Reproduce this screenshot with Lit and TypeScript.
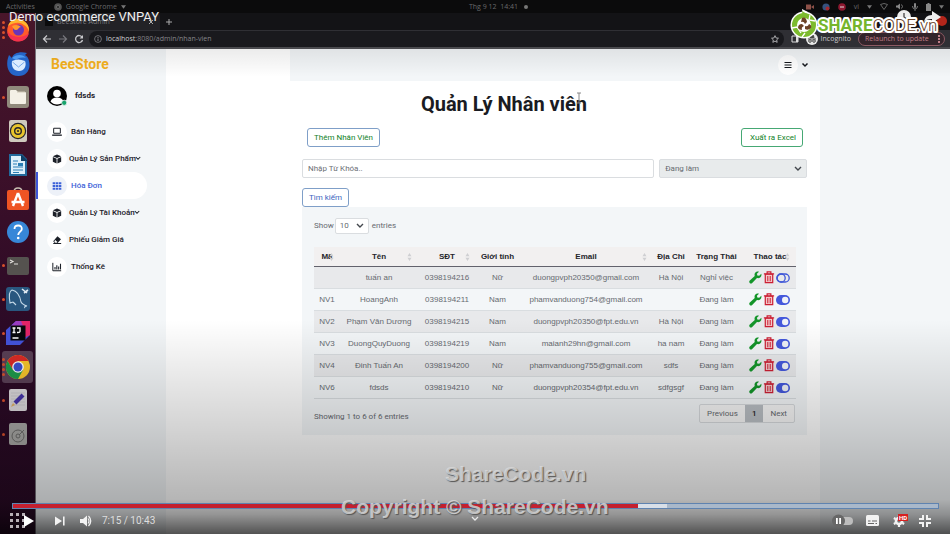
import { LitElement, html, svg, css, nothing } from "lit";
import { customElement } from "lit/decorators.js";
import { classMap } from "lit/directives/class-map.js";

const chevron = html`<svg class="chev" viewBox="0 0 8 6" width="8" height="6" aria-hidden="true"><path d="M1 1l3 3 3-3" fill="none" stroke="currentColor" stroke-width="1.4"/></svg>`;

const navIcons: Record<string, unknown> = {
  laptop: svg`<path d="M2 1.500h8v6H2z" fill="none" stroke="currentColor" stroke-width="1.200"/><path d="M.2 9h11.600v1.600H.2z" fill="currentColor"/>`,
  cube: svg`<path d="M6 .6l5 2.100L6 4.800 1 2.700z M1 3.700L5.500 5.600V11.400L1 9.200z M11 3.700L6.500 5.600V11.400L11 9.200z" fill="currentColor"/>`,
  grid: svg`<path d="M.8 1.500h3v2.500H.8z M4.500 1.500h3v2.500h-3z M8.200 1.500h3v2.500h-3z M.8 4.800h3v2.500H.8z M4.500 4.800h3v2.500h-3z M8.200 4.800h3v2.500h-3z M.8 8.100h3v2.500H.8z M4.500 8.100h3v2.500h-3z M8.200 8.100h3v2.500h-3z" fill="currentColor"/>`,
  eraser: svg`<path d="M6.500 1.500l4.300 3.600-4.300 4.900H3.400L1.500 7.600z" fill="currentColor"/><path d="M3.800 6l2.700 2.500-.8.800H3.900L2.800 7.800z" fill="#fff"/><path d="M1.500 10.200h9.500" stroke="currentColor" stroke-width="1.200"/>`,
  chart: svg`<path d="M1 1v9.500h10" fill="none" stroke="currentColor" stroke-width="1.200"/><path d="M3.600 9V6 M5.800 9V4 M8 9V5.500 M10.200 9V2" stroke="currentColor" stroke-width="1.300"/>`,
};

const dockApps: { name: string; dots: number; active?: boolean; art: unknown }[] = [
  { name: "Firefox", dots: 4, art: svg`<circle cx="12" cy="12.500" r="10.800" fill="#ff5a2a"/><path d="M2 8C4 2 9 0 13 1c6 1 11 6 10 13-1-4-3-6-5-7-4-3-9-3-16 1z" fill="#ffb52e"/><path d="M1.500 13c0 6 5 10.500 10.500 10.500S22 20 23 15c-4 5-17 6-21.500-2z" fill="#f5314f"/><circle cx="12.500" cy="12" r="5.500" fill="#6a35b8"/><path d="M6 8c4-2 7-1 9 1-3 0-2 3-5 3-2 0-3-2-4-4z" fill="#ff9a2c"/>` },
  { name: "Thunderbird", dots: 0, art: svg`<path d="M2 6C0 12 1 24 12.500 24 21 24 25 17 23 9c-.5-3-2-5-4-6l2-2C14-1 7 1 6 6L3 3z" fill="#2565c8"/><path d="M6 6c4-4 11-4 14 0-5-1-8 0-10 2z" fill="#4f9cf2"/><path d="M6 9q6-3 13 0c2 5-1 10-6 10S5 15 6 9z" fill="#dcecff"/><path d="M6.500 10l6 5 6-5" fill="none" stroke="#7aabea"/>` },
  { name: "Files", dots: 1, art: svg`<rect x="1" y="1" width="22" height="22" rx="3" fill="#918a7c"/><path d="M4 6q0-1 1-1h5l2 2h7q1 0 1 1v10q0 1-1 1H5q-1 0-1-1z" fill="#f4f0e6"/><path d="M11 7h8" stroke="#cfc8b8"/>` },
  { name: "Rhythmbox", dots: 0, art: svg`<rect x="3" y="1" width="18" height="22" rx="2" fill="#cfc9bd"/><circle cx="12" cy="12" r="8.200" fill="#25242a"/><circle cx="12" cy="12" r="5.500" fill="none" stroke="#e9c52c" stroke-width="3"/><circle cx="12" cy="12" r="2.600" fill="#e9c52c"/><circle cx="12" cy="12" r="1" fill="#222"/>` },
  { name: "Writer", dots: 0, art: svg`<path d="M3 1h13l5 5v17H3z" fill="#236a9c"/><path d="M5 3h10v5h4v13H5z" fill="#dff0fa"/><path d="M15 1l7 7h-7z" fill="#0f3f66"/><path d="M7 8h5 M7 11h4 M7 14h10 M7 17h10 M7 19.500h6" stroke="#2b7fb5" stroke-width="1.200"/><path d="M12 10h5v3h-5z" fill="#2b7fb5"/>` },
  { name: "Software", dots: 0, art: svg`<path d="M8 6q0-4 4-4t4 4" fill="none" stroke="#c9bfb2" stroke-width="1.500"/><rect x="1" y="4" width="22" height="20" rx="2" fill="#ee5423"/><path d="M12 7l5 13 M12 7L7 20 M5.500 16h13" stroke="#fff" stroke-width="2.400" fill="none"/>` },
  { name: "Help", dots: 0, art: svg`<circle cx="12" cy="12" r="11" fill="#3787d8"/><path d="M8.500 9q0-3.500 3.700-3.500T15.800 9c0 2.500-3.600 3-3.600 6" fill="none" stroke="#fff" stroke-width="1.800"/><circle cx="12.200" cy="18" r="1.300" fill="#fff"/>` },
  { name: "Terminal", dots: 1, art: svg`<rect x="1" y="3" width="22" height="18" rx="2" fill="#55524f"/><path d="M4 6l3 1.500L4 9 M8 10h4" fill="none" stroke="#e6e3df" stroke-width="1.100"/>` },
  { name: "MySQL Workbench", dots: 1, art: svg`<rect x="0" y="0" width="24" height="24" rx="3" fill="#29577f"/><path d="M7 15l-3 1C3 10 3 4 6 3c5 1 8 6 9 12 1 2 3 3 6 4-2 0-3 1-2 2 M7 15l3 3" fill="none" stroke="#c4d9e8" stroke-width="1.100"/><path d="M16 2l5 4 M18 6l4-3" stroke="#dfeaf2" stroke-width="1.600"/>` },
  { name: "IntelliJ IDEA", dots: 1, art: svg`<path d="M0 9L10 0h14v14L14 24H0z" fill="#4453dc"/><path d="M10 0h14v14l-6 3-2-12z" fill="#e62468"/><path d="M4 6L10 0h5l2 5z" fill="#9b3bc2"/><path d="M4.500 4.500h15v15h-15z" fill="#08080c"/><path d="M6.500 7h3 M8 7v4.500 M6.500 11.500h3 M11 7h3v3.500q0 1-2 1h-1 M6.500 17h6" fill="none" stroke="#fff" stroke-width="1.300"/>` },
  { name: "Google Chrome", dots: 4, active: true, art: svg`<circle cx="12" cy="12" r="12" fill="#f7c52c"/><path d="M1.600 6A12 12 0 0 1 22.400 6H12l-5 9z" fill="#da2b26"/><path d="M1.600 6A12 12 0 0 0 12 24l5-9H7z" fill="#1d9a4b"/><circle cx="12" cy="12" r="5.800" fill="#fff"/><circle cx="12" cy="12" r="4.500" fill="#3c50cf"/>` },
  { name: "Text Editor", dots: 1, art: svg`<rect x="3" y="1" width="18" height="22" rx="2" fill="#dcd9dc"/><path d="M5 5h14 M5 8h14 M5 11h14 M5 14h14 M5 17h14" stroke="#c2c0c6" stroke-width=".7"/><path d="M9 15l8-8" stroke="#4634a8" stroke-width="4"/><path d="M5 19l2-4 2 2z" fill="#e0b060"/>` },
  { name: "Disks", dots: 1, art: svg`<rect x="3" y="1" width="18" height="22" rx="2" fill="#a9a8a6"/><circle cx="12" cy="14" r="6" fill="none" stroke="#6d6c6b"/><circle cx="12" cy="14" r="2" fill="none" stroke="#6d6c6b"/><path d="M13 13l5-5" stroke="#6d6c6b"/>` },
];

const nav: { label: string; icon: string; menu?: boolean; active?: boolean; tight?: boolean }[] = [
  { label: "Bán Hàng", icon: "laptop" },
  { label: "Quản Lý Sản Phẩm", icon: "cube", menu: true },
  { label: "Hóa Đơn", icon: "grid", active: true },
  { label: "Quản Lý Tài Khoản", icon: "cube", menu: true },
  { label: "Phiếu Giảm Giá", icon: "eraser", tight: true },
  { label: "Thống Kê", icon: "chart" },
];

const columns = [
  { label: "Mã", w: 26, sort: true },
  { label: "Tên", w: 78, sort: true },
  { label: "SĐT", w: 58, sort: true },
  { label: "Giới tính", w: 43, sort: false },
  { label: "Email", w: 134, sort: true },
  { label: "Địa Chỉ", w: 36, sort: false },
  { label: "Trạng Thái", w: 55, sort: false },
  { label: "Thao tác", w: 52, sort: true },
];

const rows = [
  ["", "tuấn an", "0398194216", "Nữ", "duongpvph20350@gmail.com", "Hà Nội", "Nghỉ việc"],
  ["NV1", "HoangAnh", "0398194211", "Nam", "phamvanduong754@gmail.com", "", "Đang làm"],
  ["NV2", "Phạm Văn Dương", "0398194215", "Nam", "duongpvph20350@fpt.edu.vn", "Hà Nội", "Đang làm"],
  ["NV3", "DuongQuyDuong", "0398194219", "Nam", "maianh29hn@gmail.com", "ha nam", "Đang làm"],
  ["NV4", "Đinh Tuấn An", "0398194200", "Nữ", "phamvanduong755@gmail.com", "sdfs", "Đang làm"],
  ["NV6", "fdsds", "0398194210", "Nữ", "duongpvph20354@fpt.edu.vn", "sdfgsgf", "Đang làm"],
];

const reset = css`
  * { box-sizing: border-box; }
  button, input, select { font: inherit; color: inherit; margin: 0; padding: 0; border: 0; background: none; border-radius: 0; }
  svg { display: block; flex: none; }
  a { color: inherit; text-decoration: none; }
`;

@customElement("desktop-dock")
class DesktopDock extends LitElement {
  static styles = [reset, css`
    :host { display: flex; flex-direction: column; width: 36px; padding-bottom: 83px; border-right: 1px solid #77727a; background: linear-gradient(#48162a, #3c1029 30%, #2c0a26 60%, #280a24); }
    .app { flex: 1; display: grid; grid-template-columns: 4px 24px; align-items: center; justify-content: start; margin: 1px 2px; border-radius: 3px; }
    .active { background: #5a4056; }
    .dots { display: grid; gap: 2px; justify-content: start; }
    .dot { width: 3px; height: 3px; border-radius: 2px; background: #d8502c; }
  `];
  render() {
    return dockApps.map((a) => html`<button class=${classMap({ app: true, active: !!a.active })} aria-label=${a.name}>
      <span class="dots">${Array.from({ length: a.dots }, () => html`<span class="dot"></span>`)}</span>
      <svg viewBox="0 0 24 24" width="24" height="24">${a.art}</svg>
    </button>`);
  }
}

@customElement("browser-chrome")
class BrowserChrome extends LitElement {
  static styles = [reset, css`
    :host { display: block; font: 7px/12px "Open Sans", sans-serif; color: #c9c9cc; background: #131316; }
    .tabs { display: flex; align-items: center; height: 17px; }
    .tab { display: flex; align-items: center; gap: 4px; width: 124px; height: 17px; padding: 0 6px 0 9px; background: #222226; color: #7d7d80; border-radius: 4px 4px 0 0; }
    .tab span { flex: 1; white-space: nowrap; padding-top: 1px; }
    .plus { margin-left: 5px; color: #aaa; }
    .bar { display: flex; align-items: center; height: 19px; padding: 0 5px 0 6px; background: #2f2f34; border-bottom: 2px solid #4a4a4e; }
    .nav { display: flex; gap: 6px; width: 47px; }
    .nav button:nth-child(2) { color: #77777c; }
    .address { flex: 1; display: flex; align-items: center; gap: 4px; height: 16px; padding: 0 5px; border-radius: 8px; background: #19191d; color: #85858a; }
    .url { flex: 1; }
    .url b { font-weight: 400; color: #d0d0d2; }
    .side { margin-left: 7px; }
    .private { display: flex; align-items: center; gap: 3px; margin: 0 7px; }
    .relaunch { display: flex; align-items: center; justify-content: space-between; width: 87px; height: 14px; padding: 0 4px 0 6px; border: 1px solid #8c5962; border-radius: 8px; background: #33242b; color: #c07f88; }
  `];
  render() {
    return html`
      <div class="tabs">
        <div class="tab">
          <svg viewBox="0 0 8 8" width="8" height="8"><path d="M0 0h8v8H0z" fill="#0b0b0c"/></svg>
          <span>BeeStore Admin</span>
          <svg viewBox="0 0 6 6" width="6" height="6"><path d="M1 1l4 4M5 1L1 5" stroke="#aaa"/></svg>
        </div>
        <button class="plus" aria-label="New tab"><svg viewBox="0 0 8 8" width="8" height="8"><path d="M4 1v6M1 4h6" stroke="currentColor"/></svg></button>
      </div>
      <div class="bar">
        <div class="nav">
          <button aria-label="Back"><svg viewBox="0 0 10 10" width="10" height="10"><path d="M9 5H2M5 1.500L1.500 5 5 8.500" fill="none" stroke="currentColor" stroke-width="1.200"/></svg></button>
          <button aria-label="Forward"><svg viewBox="0 0 10 10" width="10" height="10"><path d="M1 5h7M5 1.500L8.500 5 5 8.500" fill="none" stroke="currentColor" stroke-width="1.200"/></svg></button>
          <button aria-label="Reload"><svg viewBox="0 0 10 10" width="10" height="10"><path d="M8 3a3.500 3.500 0 1 0 .5 3" fill="none" stroke="currentColor" stroke-width="1.300"/><path d="M9 1v3.500H5.500z" fill="currentColor"/></svg></button>
        </div>
        <div class="address">
          <svg viewBox="0 0 8 8" width="8" height="8"><circle cx="4" cy="4" r="3.400" fill="none" stroke="currentColor" stroke-width=".8"/><path d="M4 3.500V6M4 2v1" stroke="currentColor"/></svg>
          <a class="url" href="#nhan-vien"><b>localhost</b>:8080/admin/nhan-vien</a>
          <svg viewBox="0 0 10 10" width="8" height="8"><path d="M5 .8l1.300 2.900 3 .3-2.200 2.100.6 3.100L5 7.600 2.300 9.200l.6-3.100L.7 4l3-.3z" fill="none" stroke="#c9c9cc"/></svg>
        </div>
        <svg class="side" viewBox="0 0 8 8" width="8" height="8"><path d="M1 1h6v6H1z" fill="none" stroke="#ddd"/><path d="M5 1h2v6H5z" fill="#ddd"/></svg>
        <span class="private"><svg viewBox="0 0 12 12" width="12" height="12"><circle cx="6" cy="6" r="6" fill="#e8e8e8"/><path d="M2 6h8M4 5l.5-2.500h3L8 5" stroke="#444" fill="#444"/><circle cx="4" cy="8" r="1.300" fill="none" stroke="#444"/><circle cx="8" cy="8" r="1.300" fill="none" stroke="#444"/></svg>Incognito</span>
        <button class="relaunch">Relaunch to update <svg viewBox="0 0 2 10" width="2" height="10"><path d="M0 1h2v2H0zM0 4h2v2H0zM0 7h2v2H0z" fill="currentColor"/></svg></button>
      </div>`;
  }
}

@customElement("admin-sidebar")
class AdminSidebar extends LitElement {
  static styles = [reset, css`
    :host { display: block; width: 130px; flex: none; background: #f3f6f8; font: 500 8px/12px Roboto, sans-serif; color: #1c2028; }
    .brand { display: block; padding: 6px 0 0 15px; font: 700 14px/18px Roboto, sans-serif; color: #f5b21f; }
    .user { display: flex; align-items: center; gap: 8px; padding: 13px 0 0 11px; font-weight: 700; }
    nav { display: grid; padding-top: 12px; }
    .item { display: flex; align-items: center; gap: 4px; height: 27px; width: 111px; padding-left: 11px; white-space: nowrap; }
    .menu, .tight { gap: 2px; }
    .active { background: #fff; color: #3d62d8; border-left: 2px solid #3d55d8; padding-left: 9px; border-radius: 0 14px 14px 0; }
    .disc { display: grid; place-items: center; width: 20px; height: 20px; border-radius: 50%; background: #fff; flex: none; }
    .active .disc { background: #edf1f8; }
    .chev { width: 6px; height: 5px; margin-left: -3px; }
  `];
  render() {
    return html`
      <a class="brand" href="#home">BeeStore</a>
      <div class="user">
        <svg viewBox="0 0 20 20" width="20" height="20"><circle cx="10" cy="10" r="10" fill="#000"/><circle cx="10" cy="7.500" r="3.800" fill="#fff"/><path d="M3.500 15.500q1.500-4 6.500-4t6.500 4Q14 18.500 10 18.500t-6.500-3z" fill="#fff"/><circle cx="17.200" cy="16.800" r="2.600" fill="#17a36c" stroke="#f3f6f8" stroke-width=".8"/></svg>
        fdsds
      </div>
      <nav>${nav.map((n) => html`<a href="#" class=${classMap({ item: true, menu: !!n.menu, tight: !!n.tight, active: !!n.active })}>
        <span class="disc"><svg viewBox="0 0 12 12" width="10" height="10">${navIcons[n.icon]}</svg></span>${n.label}${n.menu ? chevron : nothing}</a>`)}</nav>`;
  }
}

@customElement("staff-page")
class StaffPage extends LitElement {
  static styles = [reset, css`
    :host { display: block; flex: 1; min-width: 0; background: #f3f6f8; font: 400 8px/12px Roboto, sans-serif; color: #666a70; }
    header { display: flex; align-items: center; justify-content: flex-end; gap: 3px; height: 32px; padding-right: 141px; color: #15181d; }
    .burger { display: grid; place-items: center; width: 20px; height: 20px; border-radius: 50%; background: #fff; }
    .sheet { margin-right: 130px; padding: 11px 13px 0 12px; background: #fff; min-height: calc(100vh - 81px); }
    h1 { margin: 0; padding-right: 101px; text-align: center; font: 700 20px/24px Roboto, sans-serif; color: #1a1b22; }
    .row { display: flex; justify-content: space-between; align-items: center; }
    .actions { padding: 0 4px 0 5px; margin-top: 12px; }
    .btn { height: 19px; padding: 0 6px; border: 1px solid #7f9fc8; border-radius: 3px; background: #fff; color: #128228; }
    .excel { border-color: #46a874; padding: 0 6px 0 8px; }
    .find { display: block; margin-top: 10px; color: #3c64c0; }
    .filters { gap: 5px; margin-top: 12px; }
    .field { position: relative; height: 19px; border: 1px solid #dadde0; border-radius: 2px; }
    .field input, .field select { width: 100%; height: 100%; padding: 0 5px; appearance: none; outline: 0; display: block; }
    input::placeholder { color: #6c7076; opacity: 1; }
    .query { flex: 353; }
    .state { flex: 147; background: #e8ebec; }
    .count { width: 34px; height: 16px; background: #fff; margin: 0 3px 0 1px; }
    .count select { padding: 0 4px; }
    .chev { position: absolute; right: 4px; top: 50%; margin-top: -3px; color: #43474d; pointer-events: none; }
    .panel { padding: 11px 11px 12px 12px; background: #f3f6f8; }
    .length { display: flex; align-items: center; }
    table { width: 100%; margin-top: 13px; border-collapse: separate; border-spacing: 0; table-layout: fixed; font-family: "Liberation Sans", sans-serif; line-height: 12px; text-align: center; white-space: nowrap; }
    th { position: relative; height: 20px; padding: 0; background: #f2f0f0; border-bottom: 1px solid #62626c; color: #24252b; font-weight: 700; }
    td { height: 22px; padding: 0; border-bottom: 1px solid #d9dde0; }
    tbody tr:nth-child(odd) td { background: #e8e9eb; }
    .sort { position: absolute; right: 6px; top: 6px; }
    .tools { display: flex; align-items: center; padding-left: 5px; gap: 1px; }
    .foot { display: flex; justify-content: space-between; align-items: flex-end; margin-top: 5px; }
    .pages { display: flex; height: 19px; margin-right: 1px; border: 1px solid #d6d9dc; border-radius: 2px; background: #f6f6f6; }
    .pages button { padding: 0 7px; }
    .pages .current { background: #b9bec3; color: #222; font-weight: 500; }
  `];
  private tools(off: boolean) {
    return html`<div class="tools">
      <button aria-label="Sửa"><svg viewBox="0 0 24 24" width="13" height="13"><path d="M22.700 5.300l-3.800 3.600-3.500-.6-.8-3.400 3.800-3.700c-3-1-6.300.3-7.600 3-.8 1.700-.7 3.300-.2 4.800L1.500 17.700c-1.400 1.300-1.400 3.200-.2 4.500 1.300 1.300 3.300 1.300 4.600-.1l8.800-9c4.900 1.300 9.500-2.500 8-7.800z" fill="#14952a"/></svg></button>
      <button aria-label="Xóa"><svg viewBox="0 0 12 14" width="12" height="13"><path d="M2 3.500h8v9H2z" fill="#f3c9cc" stroke="#cc1f33" stroke-width="1.300"/><path d="M.5 3h11M4 2.500V1h4v1.500" fill="none" stroke="#cc1f33" stroke-width="1.300"/><path d="M4.700 5.500v5.500M7.300 5.500v5.500" stroke="#cc1f33" stroke-width="1.100"/></svg></button>
      <button aria-label="Đổi trạng thái"><svg viewBox="0 0 14 10" width="14" height="10">${off
        ? svg`<rect x=".8" y="1" width="12.400" height="8" rx="4" fill="none" stroke="#4058d8" stroke-width="1.300"/><circle cx="5.200" cy="5" r="4" fill="none" stroke="#4058d8" stroke-width="1.300"/>`
        : svg`<rect x="0" y="0" width="14" height="10" rx="5" fill="#4458dc"/><circle cx="9.200" cy="5" r="3.200" fill="#f0f2f8"/>`}</svg></button>
    </div>`;
  }
  render() {
    return html`
      <header>
        <button class="burger" aria-label="Menu"><svg viewBox="0 0 8 8" width="8" height="8"><path d="M.5 1.500h7M.5 4h7M.5 6.500h7" stroke="currentColor" stroke-width="1.100"/></svg></button>
        <svg viewBox="0 0 8 6" width="8" height="6"><path d="M1.500 1.500L4 4l2.500-2.500" fill="none" stroke="currentColor" stroke-width="1.500"/></svg>
      </header>
      <main class="sheet">
        <h1>Quản Lý Nhân viên</h1>
        <div class="row actions"><button class="btn">Thêm Nhân Viên</button><button class="btn excel">Xuất ra Excel</button></div>
        <div class="row filters">
          <div class="field query"><input type="text" aria-label="Từ khóa" placeholder="Nhập Từ Khóa.."></div>
          <div class="field state"><select aria-label="Trạng thái"><option>Đang làm</option></select>${chevron}</div>
        </div>
        <button class="btn find">Tìm kiếm</button>
        <section class="panel">
          <label class="length">Show <span class="field count"><select><option>10</option></select>${chevron}</span> entries</label>
          <table>
            <colgroup>${columns.map((c) => html`<col style="width:${c.w}px">`)}</colgroup>
            <thead><tr>${columns.map((c) => html`<th scope="col">${c.label}${c.sort ? html`<svg class="sort" viewBox="0 0 5 8" width="5" height="8"><path d="M2.500 0L4.500 3.300H.5zM2.500 8L.5 4.700h4z" fill="#cfcfd2"/></svg>` : nothing}</th>`)}</tr></thead>
            <tbody>${rows.map((r, i) => html`<tr>${r.map((v) => html`<td>${v}</td>`)}<td>${this.tools(i === 0)}</td></tr>`)}</tbody>
          </table>
          <div class="foot">
            <span>Showing 1 to 6 of 6 entries</span>
            <div class="pages"><button>Previous</button><button class="current">1</button><button>Next</button></div>
          </div>
        </section>
      </main>`;
  }
}

@customElement("video-controls")
class VideoControls extends LitElement {
  static styles = [reset, css`
    :host { display: block; padding: 0 11px 0 12px; color: #efefef; font: 400 10px/14px Roboto, sans-serif; }
    .seek { display: block; width: 100%; height: 6px; appearance: none; border: 1px solid #5f83b0; outline: 0; background: linear-gradient(to right, #c4202f 67.600%, #d8dfe8 67.600%, #d8dfe8 70.700%, #a9b8ca 70.700%); }
    .seek::-webkit-slider-thumb { appearance: none; width: 1px; height: 1px; }
    .bar { display: flex; align-items: center; height: 25px; padding-bottom: 2px; }
    .grid { margin-left: -2px; }
    .play { margin-left: -3px; }
    .next { margin-left: 20px; }
    .vol { margin-left: 15px; }
    .time { margin-left: 10px; flex: 1; color: #dedede; }
    .right { display: flex; align-items: center; gap: 13px; padding-right: 8px; }
    .down { position: absolute; left: 50%; bottom: 12px; margin-left: -4px; }
    .gear { position: relative; }
    .hd { position: absolute; left: 6px; top: -1px; width: 10px; height: 7px; background: #d6201f; color: #fff; font: 700 6px/7px Roboto, sans-serif; text-align: center; }
  `];
  render() {
    return html`
      <input class="seek" type="range" min="0" max="643" .value=${"435"} aria-label="Seek">
      <div class="bar">
        <svg class="grid" viewBox="0 0 16 16" width="16" height="16"><path d="M0 0h3v3H0zM6 0h3v3H6zM12 0h3v3h-3zM0 6h3v3H0zM6 6h3v3H6zM12 6h3v3h-3zM0 12h3v3H0zM6 12h3v3H6zM12 12h3v3h-3z" fill="#b8b0b6"/></svg>
        <button class="play" aria-label="Play"><svg viewBox="0 0 12 12" width="12" height="12"><path d="M1 0l10 6-10 6z" fill="#fff"/></svg></button>
        <button class="next" aria-label="Next"><svg viewBox="0 0 10 10" width="10" height="10"><path d="M0 .5L7 5l-7 4.500zM8 .5h1.600v9H8z" fill="#f2f2f2"/></svg></button>
        <button class="vol" aria-label="Mute"><svg viewBox="0 0 12 12" width="12" height="12"><path d="M0 4h3l4-3.500v11L3 8H0z" fill="#f2f2f2"/><path d="M8 3.500q2 2.500 0 5M8.500 1q4.500 5 0 10" fill="none" stroke="#f2f2f2" stroke-width="1.200"/></svg></button>
        <span class="time">7:15 / 10:43</span>
        <div class="right">
          <button aria-label="Autoplay"><svg viewBox="0 0 21 14" width="21" height="14"><rect x="6" y="3" width="15" height="8" rx="4" fill="#bdbdbd"/><circle cx="6.500" cy="7" r="6.500" fill="#676767"/><path d="M4 4h1.800v6H4zM7.200 4H9v6H7.200z" fill="#fff"/></svg></button>
          <button aria-label="Subtitles"><svg viewBox="0 0 13 11" width="13" height="11"><rect width="13" height="11" rx="1.500" fill="#f2f2f2"/><path d="M2 6h2.500M6 6h5M2 8.500h6M9.500 8.500H11" stroke="#666" stroke-width="1.200"/></svg></button>
          <button class="gear" aria-label="Settings"><svg viewBox="0 0 14 14" width="14" height="12"><circle cx="7" cy="7" r="3.600" fill="none" stroke="#f2f2f2" stroke-width="3"/><path d="M7 0v2.500M7 11.500V14M1 3.500l2 1.200M11 9.300l2 1.200M1 10.500l2-1.200M13 3.500l-2 1.200" stroke="#f2f2f2" stroke-width="2.600"/></svg><span class="hd">HD</span></button>
          <button aria-label="Exit full screen"><svg viewBox="0 0 12 12" width="12" height="12"><path d="M4 0v4H0M8 0v4h4M4 12V8H0M8 12V8h4" fill="none" stroke="#f2f2f2" stroke-width="2"/></svg></button>
        </div>
      </div>
      <svg class="down" viewBox="0 0 8 6" width="8" height="6"><path d="M1 1l3 3 3-3" fill="none" stroke="#e8e8e8" stroke-width="1.300"/></svg>`;
  }
}

@customElement("app-root")
class AppRoot extends LitElement {
  static styles = [reset, css`
    :host { display: grid; grid-template: 13px 1fr / 36px minmax(0, 1fr); position: relative; min-height: 100vh; overflow: hidden; background: #fff; font-family: Roboto, sans-serif; }
    .status { grid-column: 1 / -1; display: grid; grid-template-columns: 1fr auto 1fr; align-items: center; padding: 0 6px; background: #0b0b0c; color: #69696b; font: 7px/12px "Open Sans", sans-serif; }
    .left, .mid, .tray { display: flex; align-items: center; }
    .left { gap: 4px; }
    .left .chrome { margin-left: 15px; }
    .mid { gap: 6px; padding-left: 47px; }
    .tray { justify-content: flex-end; gap: 8px; }
    .window { display: flex; flex-direction: column; min-width: 0; }
    .page { flex: 1; display: flex; position: relative; }
    .page::before { content: ""; position: absolute; inset: 0 0 auto 0; height: 28px; background: linear-gradient(rgba(0, 0, 0, .08), transparent); pointer-events: none; }
    staff-page { margin-left: 124px; }
    .shade { position: absolute; inset: auto 0 0 0; height: 214px; pointer-events: none; background: linear-gradient(transparent, rgba(0, 0, 0, .05) 15%, rgba(0, 0, 0, .17) 50%, rgba(0, 0, 0, .29) 84%, rgba(0, 0, 0, .42) 91%, rgba(0, 0, 0, .68)); }
    video-controls { position: absolute; inset: auto 0 0 0; }
    .title { position: absolute; left: 9px; top: 8px; font: 400 13px/18px Roboto, sans-serif; color: #eee; }
    .mark { position: absolute; font: 700 21px/24px "Liberation Sans", sans-serif; color: rgba(220, 220, 220, .8); text-shadow: 1px 1px 1px #555; white-space: nowrap; }
    .one { left: 445px; bottom: 48px; }
    .two { left: 341px; bottom: 15px; }
    .logo { position: absolute; right: 8px; top: 8px; }
    .logo text { font: 700 17px Roboto, sans-serif; fill: #76b52c; stroke: #fff; stroke-width: 4px; stroke-linejoin: round; paint-order: stroke; }
    .logo .thin { font-weight: 300; fill: #6b4226; }
    .round { position: absolute; right: 0; top: 8px; }
    .cursor { position: absolute; left: 576px; top: 92px; }
  `];
  render() {
    return html`
      <div class="status">
        <div class="left"><span>Activities</span>
          <svg class="chrome" viewBox="0 0 8 8" width="8" height="8"><circle cx="4" cy="4" r="3.800" fill="#555"/><circle cx="4" cy="4" r="1.500" fill="#222" stroke="#888" stroke-width=".6"/></svg>
          <span>Google Chrome</span><svg viewBox="0 0 6 4" width="5" height="4"><path d="M0 0h6L3 4z" fill="#777"/></svg></div>
        <div class="mid"><span>Thg 9 12&nbsp; 14:41</span><svg viewBox="0 0 4 4" width="4" height="4"><circle cx="2" cy="2" r="2" fill="#777"/></svg></div>
        <div class="tray">
          <svg viewBox="0 0 8 6" width="8" height="6"><path d="M0 .5h5v5H0zM5 3l3-2v4z" fill="#8d5148"/></svg>
          <svg viewBox="0 0 8 8" width="8" height="8"><circle cx="4" cy="4" r="3.600" fill="#35527e"/><circle cx="5.500" cy="5.500" r="2" fill="#a32a30"/></svg>
          <svg viewBox="0 0 8 8" width="8" height="8"><circle cx="4" cy="4" r="3.800" fill="#8e1830"/><path d="M2 4h4" stroke="#ddd"/></svg>
          <span>vi</span><svg viewBox="0 0 6 4" width="5" height="4"><path d="M0 0h6L3 4z" fill="#777"/></svg>
          <svg viewBox="0 0 8 7" width="8" height="7"><path d="M.5 1.500q3.500-2 7 0L4 6.500z" fill="none" stroke="#666"/></svg>
          <svg viewBox="0 0 8 7" width="8" height="7"><path d="M0 2.500h1.500L4 .5v6L1.500 4.500H0z" fill="#888"/><path d="M5.500 1.500q2 2 0 4" fill="none" stroke="#777"/></svg>
          <svg viewBox="0 0 6 8" width="6" height="8"><rect x="2" width="2" height="5" rx="1" fill="#888"/><path d="M.5 3q0 3 2.500 3t2.500-3M3 6v2" fill="none" stroke="#777"/></svg>
          <svg viewBox="0 0 5 8" width="5" height="8"><path d="M0 1h1.500V0h2v1H5v7H0z" fill="#888"/></svg>
          <svg viewBox="0 0 6 4" width="5" height="4"><path d="M0 0h6L3 4z" fill="#777"/></svg>
        </div>
      </div>
      <desktop-dock></desktop-dock>
      <div class="window">
        <browser-chrome></browser-chrome>
        <div class="page"><admin-sidebar></admin-sidebar><staff-page></staff-page></div>
      </div>
      <svg class="cursor" viewBox="0 0 6 12" width="6" height="12"><path d="M1 1h4M3 1v10M1 11h4" stroke="#888" fill="none"/></svg>
      <div class="shade"></div>
      <div class="title">Demo ecommerce VNPAY</div>
      <svg class="round" viewBox="0 0 54 18" width="54" height="18"><circle cx="8" cy="9" r="7" fill="#eee"/><path d="M8 5v4l3 2" fill="none" stroke="#444" stroke-width="1.300"/><circle cx="46" cy="13" r="5" fill="#b3261b"/><path d="M36 3l9 6-9 6v-4q-6 0-8 3 1-7 8-7z" fill="#eee"/></svg>
      <svg class="logo" viewBox="0 0 152 32" width="152" height="32">
        <circle cx="14" cy="17" r="13.500" fill="#fff"/><path d="M12 1l6 3-5 5z" fill="#fff"/>
        <circle cx="14" cy="17" r="9.500" fill="#fff" stroke="#7cbb2e" stroke-width="5"/>
        <path d="M12 3l5 3-4 4z" fill="#7cbb2e"/>
        <path d="M2 20l5-1 4 6M20 7l-1 5 6 1M12 29l3-4" fill="none" stroke="#fff" stroke-width="1.300"/>
        <path d="M12 10q4-2 5 4l-2 2q-1-3-4-2zM8 20q0-4 4-4l2 2q-3 1-2 4-3 0-4-2zM21 20q-3 3-6 1v-3q3 1 4-2 3 1 2 4z" fill="#6b4226"/>
        <text x="28" y="23">SHARE<tspan class="thin">CODE.vn</tspan></text>
      </svg>
      <div class="mark one">ShareCode.vn</div>
      <video-controls></video-controls>
      <div class="mark two">Copyright © ShareCode.vn</div>`;
  }
}
